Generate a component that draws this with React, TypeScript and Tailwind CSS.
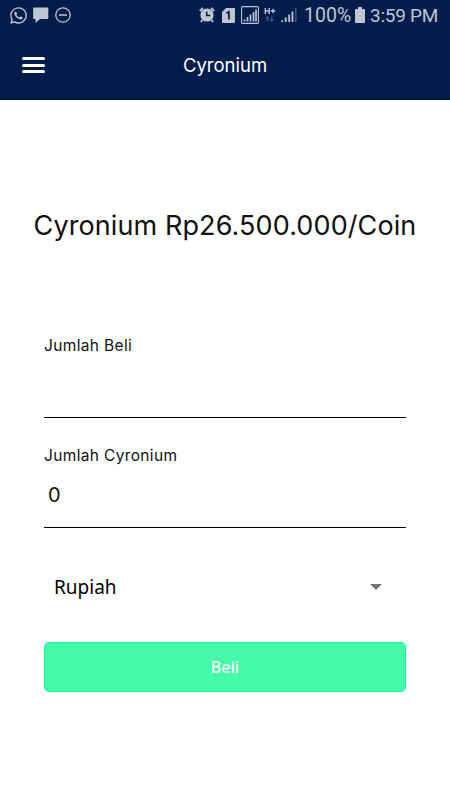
import { FaWhatsapp } from "react-icons/fa";

interface SignalProps {
  className?: string;
}

/**
 * Left part of the status bar: pending notifications
 */
function Notifications() {
  return (
    <div className="flex items-center">
      <FaWhatsapp className="h-[19px] w-[17px]" aria-label="WhatsApp" />
      <svg className="ml-[6px] h-[16px] w-[16px]" viewBox="0 0 16 16" fill="currentColor">
        <path d="M1 .5h13.5a.8.8 0 0 1 .8.8v10a.8.8 0 0 1-.8.8H7L2.5 16v-3.9H1a.8.8 0 0 1-.8-.8v-10A.8.8 0 0 1 1 .5Z" />
      </svg>
      <svg className="ml-[6px] h-[16px] w-[16px]" viewBox="0 0 16 16" fill="none" stroke="currentColor">
        <circle cx="8" cy="8" r="7.2" strokeWidth="1.3" />
        <path d="M4 8h8" strokeWidth="1.5" />
      </svg>
    </div>
  );
}

function AlarmIcon() {
  return (
    <svg className="h-[16px] w-[16px]" viewBox="0 0 16 16" fill="none">
      <circle cx="8" cy="8" r="6.6" fill="currentColor" />
      <path d="M.8 4 4 1M15.2 4 12 1M3.4 13l-1.5 2M12.6 13l1.5 2" stroke="currentColor" strokeWidth="1.9" />
      <path d="M7.7 4.5V8.4h3.6" stroke="#021d4b" strokeWidth="1.5" />
    </svg>
  );
}

function SimIcon() {
  return (
    <svg className="ml-[7px] h-[15px] w-[13px]" viewBox="0 0 13 15">
      <path d="M4 0h8a1 1 0 0 1 1 1v13a1 1 0 0 1-1 1H1a1 1 0 0 1-1-1V4Z" fill="currentColor" />
      <path d="M4.3 5.2 6.9 3.8V11.5" fill="none" stroke="#021d4b" strokeWidth="1.7" />
    </svg>
  );
}

function BoxedSignal({ className }: SignalProps) {
  return (
    <svg className={className} viewBox="0 0 18 18" fill="none" stroke="currentColor">
      <rect x=".6" y=".6" width="16.8" height="16.8" rx="1" strokeWidth="1.1" />
      <path d="M3.5 15.5v-2M6.5 15.5v-4.5M9.5 15.5v-7M12.5 15.5V6M15 15.5V3.5" strokeWidth="1.7" />
    </svg>
  );
}

function NetworkType() {
  return (
    <svg className="mb-[1px] ml-[5px] h-[16px] w-[12px]" viewBox="0 0 12 16" fill="none" stroke="currentColor">
      <path d="M1.3 1v6M5.2 1v6M1.3 4h4" strokeWidth="1.4" />
      <path d="M6.8 4h4.4M9 1.8v4.4" strokeWidth="1.3" />
      <path
        d="M3.4 14.2V9.8M1.9 11.4l1.5-1.5 1.5 1.5M7.8 9.6V14M6.3 12.4l1.5 1.5 1.5-1.5"
        strokeWidth="1.1"
        opacity=".4"
      />
    </svg>
  );
}

function Signal({ className }: SignalProps) {
  return (
    <svg className={className} viewBox="0 0 16 16" fill="none" stroke="currentColor">
      <path d="M1.2 15v-1.8M4.7 15v-4.5M8.2 15V7.5" strokeWidth="1.8" />
      <path d="M11.5 15V4.5" strokeWidth="1.8" />
      <path d="M14.8 15V0.5" strokeWidth="1.5" opacity=".35" />
    </svg>
  );
}

function StatusBar() {
  return (
    <div className="flex h-[30px] items-center pr-[12px] pl-[10px] text-[#bec5d3]">
      <Notifications />
      <div className="ml-auto flex items-center">
        <AlarmIcon />
        <SimIcon />
        <BoxedSignal className="ml-[6px] h-[18px] w-[18px]" />
        <NetworkType />
        <Signal className="ml-[5px] h-[16px] w-[16px]" />
        <span className="ml-[7px] w-[51px] pt-[1px] text-[19.5px] leading-[30px] whitespace-nowrap">100%</span>
        <svg className="h-[16px] w-[10px]" viewBox="0 0 10 16" fill="currentColor">
          <path d="M3 0h4v2h2a1 1 0 0 1 1 1v12a1 1 0 0 1-1 1H1a1 1 0 0 1-1-1V3a1 1 0 0 1 1-1h2Z" />
        </svg>
        <span className="ml-[5px] w-[68px] pt-[1px] text-[19px] leading-[30px] tracking-[-0.25px] whitespace-nowrap">
          3:59 PM
        </span>
      </div>
    </div>
  );
}

function Header() {
  return (
    <header className="h-[100px] border-b border-[#010b2b] bg-[#021d4b] font-['Roboto',sans-serif]">
      <StatusBar />
      <div className="grid h-[70px] grid-cols-[68px_1fr_68px] items-center">
        <button className="ml-[22px] flex w-[23px] flex-col gap-[3.5px]" aria-label="Menu">
          <span className="h-[3px] w-full rounded-full bg-white" />
          <span className="h-[3px] w-full rounded-full bg-white" />
          <span className="h-[3px] w-full rounded-full bg-white" />
        </button>
        <h1 className="pt-[2px] text-center font-['Inter',sans-serif] text-[18.5px] text-white">Cyronium</h1>
      </div>
    </header>
  );
}

interface FieldProps {
  label: string;
  value?: string;
}

/**
 * Underlined input with its label on top
 */
function Field({ label, value }: FieldProps) {
  return (
    <label className="flex h-[110px] flex-col border-b border-black pt-[28px]">
      <span className="text-[15.5px] leading-[20px] tracking-[0.35px]">{label}</span>
      <input className="mt-[9px] h-[40px] w-full pl-[4px] text-[20px] outline-none" defaultValue={value} />
    </label>
  );
}

export default function App() {
  return (
    <div className="flex min-h-[800px] w-[450px] flex-col bg-white font-['Inter',sans-serif] text-[#111]">
      <Header />
      <main className="flex flex-col px-[44px]">
        <h2 className="-mx-[20px] mt-[106px] text-center text-[27px] leading-[40px] tracking-[0.1px] whitespace-nowrap">
          Cyronium Rp26.500.000/Coin
        </h2>
        <form className="mt-[62px] flex flex-col">
          <Field label="Jumlah Beli" />
          <Field label="Jumlah Cyronium" value="0" />
          <div className="mt-[34px] flex h-[50px] items-center justify-between pr-[24px] pl-[10px]">
            <span className="pt-[1px] font-['Noto_Sans',sans-serif] text-[19px] text-black">Rupiah</span>
            <svg className="h-[6px] w-[12px]" viewBox="0 0 12 6" fill="#757575">
              <path d="M0 0h12L6 6Z" />
            </svg>
          </div>
          <button
            type="button"
            className="mt-[30px] h-[50px] rounded-[5px] border border-[#18f39a] bg-[#44fca7] font-['Noto_Sans',sans-serif] text-[16px] font-medium text-white"
          >
            Beli
          </button>
        </form>
      </main>
    </div>
  );
}
